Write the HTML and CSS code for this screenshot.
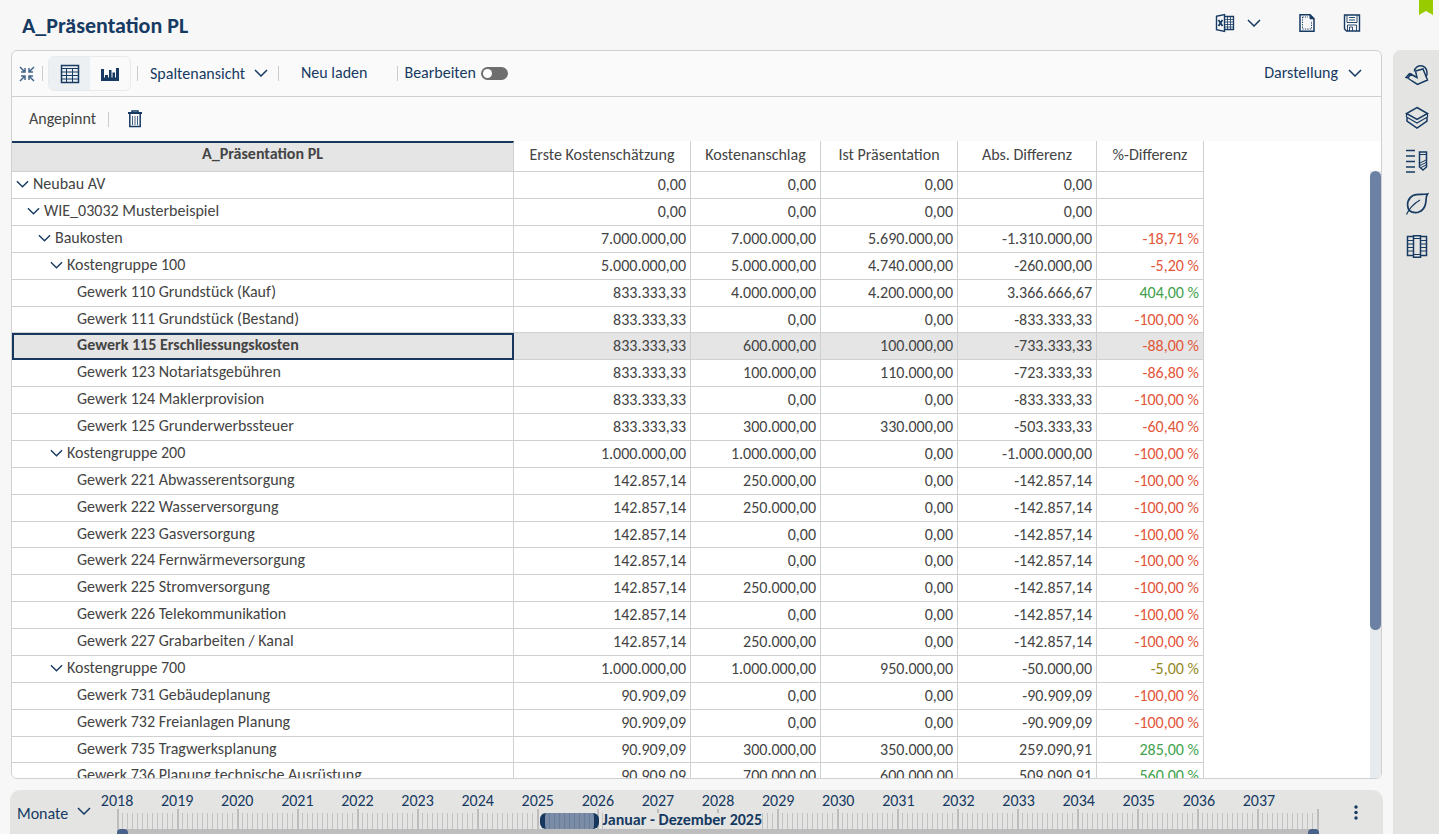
FILE: index.html
```html
<!DOCTYPE html>
<html lang="de">
<head>
<meta charset="utf-8">
<title>A_Präsentation PL</title>
<link rel="stylesheet" href="styles.css">
</head>
<body>
<svg class="defs" aria-hidden="true">
  <symbol id="chev" viewBox="0 0 14 8"><path d="M1 1l6 6 6-6" fill="none" stroke="currentColor" stroke-width="1.5"/></symbol>
</svg>
<header class="top">
  <h1>A_Präsentation PL</h1>
  <div class="actions">
    <button class="icon excel" aria-label="Excel-Export">
      <svg width="20" height="20" viewBox="0 0 20 20" fill="none" stroke="currentColor"><path d="M1.500 3.200l8-1.700v17l-8-1.700z" stroke-width="1.400"/><path d="M3.500 7l4 6M7.500 7l-4 6" stroke-width="1.800"/><path d="M10 3.500h8.500v13H10" stroke-width="1.300"/><path d="M10 6.500h8M10 9h8M10 11.500h8M10 14h8M12.500 4v12M15.500 4v12" stroke-width=".8"/></svg>
      <svg width="14" height="8"><use href="#chev"/></svg>
    </button>
    <button class="icon" aria-label="Neue Seite">
      <svg width="18" height="20" viewBox="0 0 18 20" fill="none" stroke="currentColor"><path d="M2 1.800h10l4 4v12.500H2z" stroke-width="1.500"/><path d="M12 1.800v4h4z" fill="currentColor"/><path d="M4.500 4v12h9V8M4.500 4H10" stroke-dasharray="1.200 1.200"/></svg>
    </button>
    <button class="icon" aria-label="Speichern">
      <svg width="18" height="20" viewBox="0 0 18 20" fill="none" stroke="currentColor"><path d="M1.500 2h15v16H3.500l-2-2z" stroke-width="1.400"/><path d="M4 2v7.500h10V2M6 4.500h6M6 7h6M4.500 18v-6h9v6M6.500 18v-4h3v4" stroke-width=".9"/></svg>
    </button>
  </div>
  <svg class="flag" width="14" height="15" viewBox="0 0 14 15"><path d="M0 0h14v15l-7-4-7 4z" fill="#9c0"/></svg>
</header>
<div class="body">
  <div class="work">
    <main class="panel">
      <div class="bar">
        <button class="icon shrink" aria-label="Verkleinern">
          <svg width="16" height="16" viewBox="0 0 16 16" fill="none" stroke="currentColor" stroke-width="1.500"><path d="M1 1l5 5M2 6h4V2M15 1l-5 5M14 6h-4V2M1 15l5-5M2 10h4v4M15 15l-5-5M14 10h-4v4"/></svg>
        </button>
        <span class="sep"></span>
        <div class="views">
          <button class="view on" aria-label="Tabelle">
            <svg width="20" height="20" viewBox="0 0 20 20" fill="none" stroke="currentColor"><path d="M1.500 1.500h17v17h-17z" stroke-width="1.500"/><path d="M1.500 4.500h17M1.500 8h17M1.500 11.500h17M1.500 15h17M6.500 4.500v14M12.500 4.500v14"/></svg>
          </button>
          <button class="view" aria-label="Diagramm">
            <svg width="20" height="16" viewBox="0 0 20 16" fill="currentColor"><path d="M1 3h3v12H1zM5 9h3v6H5zM9 4h2.500v11H9zM12.500 6.500H15V15h-2.500zM16 2h3v13h-3zM1 11.500h18V15H1z"/></svg>
          </button>
        </div>
        <span class="sep"></span>
        <label class="pick"><select class="spalten" aria-label="Ansicht"><option>Spaltenansicht</option></select><svg width="14" height="8"><use href="#chev"/></svg></label>
        <span class="sep"></span>
        <button class="text">Neu laden</button>
        <span class="sep"></span>
        <label class="switch">Bearbeiten <input type="checkbox"></label>
        <button class="text display">Darstellung <svg width="14" height="8"><use href="#chev"/></svg></button>
      </div>
      <div class="bar pins">
        <span>Angepinnt</span>
        <span class="sep"></span>
        <button class="icon" aria-label="Löschen">
          <svg width="16" height="18" viewBox="0 0 16 18" fill="none" stroke="currentColor"><path d="M1 3h14" stroke-width="2"/><path d="M5 2V1h6v1M2.800 4v12.500h10.400V4" stroke-width="1.500"/><path d="M5.500 6v9M8 6v9M10.500 6v9" stroke-width=".8"/></svg>
        </button>
      </div>
      <div class="grid">
        <table>
          <colgroup><col class="c0"><col class="c1"><col class="c2"><col class="c3"><col class="c4"><col class="c5"></colgroup>
          <thead><tr><th>A_Präsentation PL</th><th>Erste Kostenschätzung</th><th>Kostenanschlag</th><th>Ist Präsentation</th><th>Abs. Differenz</th><th>%-Differenz</th></tr></thead>
          <tbody>
            <tr class="l0"><th><svg width="14" height="8"><use href="#chev"/></svg>Neubau AV</th><td>0,00</td><td>0,00</td><td>0,00</td><td>0,00</td><td></td></tr>
            <tr class="l1"><th><svg width="14" height="8"><use href="#chev"/></svg>WIE_03032 Musterbeispiel</th><td>0,00</td><td>0,00</td><td>0,00</td><td>0,00</td><td></td></tr>
            <tr class="l2"><th><svg width="14" height="8"><use href="#chev"/></svg>Baukosten</th><td>7.000.000,00</td><td>7.000.000,00</td><td>5.690.000,00</td><td>-1.310.000,00</td><td class="neg">-18,71 %</td></tr>
            <tr class="l3"><th><svg width="14" height="8"><use href="#chev"/></svg>Kostengruppe 100</th><td>5.000.000,00</td><td>5.000.000,00</td><td>4.740.000,00</td><td>-260.000,00</td><td class="neg">-5,20 %</td></tr>
            <tr><th>Gewerk 110 Grundstück (Kauf)</th><td>833.333,33</td><td>4.000.000,00</td><td>4.200.000,00</td><td>3.366.666,67</td><td class="pos">404,00 %</td></tr>
            <tr><th>Gewerk 111 Grundstück (Bestand)</th><td>833.333,33</td><td>0,00</td><td>0,00</td><td>-833.333,33</td><td class="neg">-100,00 %</td></tr>
            <tr class="current"><th>Gewerk 115 Erschliessungskosten</th><td>833.333,33</td><td>600.000,00</td><td>100.000,00</td><td>-733.333,33</td><td class="neg">-88,00 %</td></tr>
            <tr><th>Gewerk 123 Notariatsgebühren</th><td>833.333,33</td><td>100.000,00</td><td>110.000,00</td><td>-723.333,33</td><td class="neg">-86,80 %</td></tr>
            <tr><th>Gewerk 124 Maklerprovision</th><td>833.333,33</td><td>0,00</td><td>0,00</td><td>-833.333,33</td><td class="neg">-100,00 %</td></tr>
            <tr><th>Gewerk 125 Grunderwerbssteuer</th><td>833.333,33</td><td>300.000,00</td><td>330.000,00</td><td>-503.333,33</td><td class="neg">-60,40 %</td></tr>
            <tr class="l3"><th><svg width="14" height="8"><use href="#chev"/></svg>Kostengruppe 200</th><td>1.000.000,00</td><td>1.000.000,00</td><td>0,00</td><td>-1.000.000,00</td><td class="neg">-100,00 %</td></tr>
            <tr><th>Gewerk 221 Abwasserentsorgung</th><td>142.857,14</td><td>250.000,00</td><td>0,00</td><td>-142.857,14</td><td class="neg">-100,00 %</td></tr>
            <tr><th>Gewerk 222 Wasserversorgung</th><td>142.857,14</td><td>250.000,00</td><td>0,00</td><td>-142.857,14</td><td class="neg">-100,00 %</td></tr>
            <tr><th>Gewerk 223 Gasversorgung</th><td>142.857,14</td><td>0,00</td><td>0,00</td><td>-142.857,14</td><td class="neg">-100,00 %</td></tr>
            <tr><th>Gewerk 224 Fernwärmeversorgung</th><td>142.857,14</td><td>0,00</td><td>0,00</td><td>-142.857,14</td><td class="neg">-100,00 %</td></tr>
            <tr><th>Gewerk 225 Stromversorgung</th><td>142.857,14</td><td>250.000,00</td><td>0,00</td><td>-142.857,14</td><td class="neg">-100,00 %</td></tr>
            <tr><th>Gewerk 226 Telekommunikation</th><td>142.857,14</td><td>0,00</td><td>0,00</td><td>-142.857,14</td><td class="neg">-100,00 %</td></tr>
            <tr><th>Gewerk 227 Grabarbeiten / Kanal</th><td>142.857,14</td><td>250.000,00</td><td>0,00</td><td>-142.857,14</td><td class="neg">-100,00 %</td></tr>
            <tr class="l3"><th><svg width="14" height="8"><use href="#chev"/></svg>Kostengruppe 700</th><td>1.000.000,00</td><td>1.000.000,00</td><td>950.000,00</td><td>-50.000,00</td><td class="mid">-5,00 %</td></tr>
            <tr><th>Gewerk 731 Gebäudeplanung</th><td>90.909,09</td><td>0,00</td><td>0,00</td><td>-90.909,09</td><td class="neg">-100,00 %</td></tr>
            <tr><th>Gewerk 732 Freianlagen Planung</th><td>90.909,09</td><td>0,00</td><td>0,00</td><td>-90.909,09</td><td class="neg">-100,00 %</td></tr>
            <tr><th>Gewerk 735 Tragwerksplanung</th><td>90.909,09</td><td>300.000,00</td><td>350.000,00</td><td>259.090,91</td><td class="pos">285,00 %</td></tr>
            <tr><th>Gewerk 736 Planung technische Ausrüstung</th><td>90.909,09</td><td>700.000,00</td><td>600.000,00</td><td>509.090,91</td><td class="pos">560,00 %</td></tr>
          </tbody>
        </table>
        <div class="scroll"><div class="thumb"></div></div>
      </div>
    </main>
    <footer class="timeline">
      <label class="pick"><select class="monate" aria-label="Zeiteinheit"><option>Monate</option></select><svg width="14" height="8"><use href="#chev"/></svg></label>
      <div class="scale">
        <div class="years"><span>2018</span><span>2019</span><span>2020</span><span>2021</span><span>2022</span><span>2023</span><span>2024</span><span>2025</span><span>2026</span><span>2027</span><span>2028</span><span>2029</span><span>2030</span><span>2031</span><span>2032</span><span>2033</span><span>2034</span><span>2035</span><span>2036</span><span>2037</span></div>
        <div class="ticks"><i></i><i></i><i></i><i></i><i></i><i></i><i></i><i></i><i></i><i></i><i></i><i></i><i></i><i></i><i></i><i></i><i></i><i></i><i></i><i></i></div>
        <div class="track"><b></b><b></b></div>
        <div class="range"><div class="span"></div><strong>Januar - Dezember 2025</strong></div>
      </div>
      <button class="icon more" aria-label="Mehr"><svg width="4" height="16" viewBox="0 0 4 16" fill="currentColor"><circle cx="2" cy="2" r="1.700"/><circle cx="2" cy="7.500" r="1.700"/><circle cx="2" cy="13" r="1.700"/></svg></button>
    </footer>
  </div>
  <nav class="side">
    <button class="icon" aria-label="Gießkanne"><svg width="24" height="24" viewBox="0 0 24 24" fill="none" stroke="currentColor" stroke-width="1.500"><path d="M10.500 8l7.500-2 4.500 11-10 4.500-5.500-3.500-5-3.500M10.500 8l1.500 6.500-6.500-3.500M1 14.500l3.500-4 1.500.5-3 4z"/><path d="M9.500 8.500c0-4 4-6.500 8-5.500s6 7 3.500 11"/></svg></button>
    <button class="icon" aria-label="Ebenen"><svg width="24" height="24" viewBox="0 0 24 24" fill="none" stroke="currentColor" stroke-width="1.500"><path d="M12 1.500l10.500 6-10.500 6-10.500-6z"/><path d="M1.500 7.500v3.500l10.500 6 10.500-6V7.500" stroke-width="1.200"/><path d="M2 11.500v3.500l10 7 10-7v-3.500"/></svg></button>
    <button class="icon" aria-label="Auswertung"><svg width="24" height="24" viewBox="0 0 24 24" fill="none" stroke="currentColor" stroke-width="1.500"><path d="M1 1.500h9M1 7h9M1 12.500h9M1 18h9M1 23h9M14.500 3h7v15l-3.500 3-3.500-3z"/><path d="M14.500 5.500h7M15 14l6-3M15 16.500l6-3M16 18.500l5-2.500" stroke-width="1"/></svg></button>
    <button class="icon" aria-label="Nachhaltigkeit"><svg width="24" height="24" viewBox="0 0 24 24" fill="none" stroke="currentColor" stroke-width="1.700"><path d="M4 18.500C1 12 3 6 8 3.500c4-1.800 9-.5 14.500-1.500-2 3-1 6-2 10-1.500 7-9 11.500-16.500 6.500z"/><path d="M1.500 22.500C4 17 9 11.500 15 8" stroke-width="1.200"/></svg></button>
    <button class="icon" aria-label="Archiv"><svg width="24" height="24" viewBox="0 0 24 24" fill="none" stroke="currentColor" stroke-width="1.500"><path d="M8.500 1.500H2.500v19h6M15.500 1.500h6v19h-6M8.500 .8h7v21.400h-7z"/><path d="M8.500 3.500h7M8.500 19.500h7M2.500 5.500h6M2.500 9h6M2.500 12.500h6M2.500 16h6M15.500 5.500h6M15.500 9h6M15.500 12.500h6M15.500 16h6" stroke-width="1"/></svg></button>
  </nav>
</div>
</body>
</html>
```

FILE: styles.css
```css
* { box-sizing: border-box; }
body {
  margin: 0;
  height: 100vh;
  display: flex;
  flex-direction: column;
  overflow: hidden;
  background: #f7f7f7;
  color: #444;
  font: 16px/20px Carlito, Lato, sans-serif;
}
button, select { font: inherit; color: inherit; background: none; border: 0; padding: 0; margin: 0; }
select { appearance: none; }
svg { display: block; flex: none; }
.defs { position: absolute; width: 0; height: 0; }
.icon { display: flex; align-items: center; color: #163a62; }

.top { display: flex; justify-content: space-between; align-items: center; height: 50px; flex: none; padding: 0 78px 4px 22px; color: #163a62; }
h1 { margin: 0; padding-top: 6px; font-size: 22px; line-height: 28px; }
.actions { display: flex; gap: 27px; }
.excel { gap: 12px; margin-right: 10px; }
.flag { position: absolute; top: 0; right: 6px; }

.body { flex: 1; display: flex; gap: 10px; min-height: 0; }
.work { flex: 1; min-width: 0; display: flex; flex-direction: column; gap: 11px; padding-left: 10px; }
.panel { flex: 1; min-height: 0; display: flex; flex-direction: column; margin: 0 1px; border: 1px solid #cfd0d1; border-radius: 6px; background: #fafafa; overflow: hidden; }

.bar { display: flex; align-items: center; height: 46px; flex: none; border-bottom: 1px solid #cfd0d1; color: #163a62; }
.shrink { margin: 0 7px; color: #45678c; }
.sep { width: 1px; height: 15px; background: #ccc; }
.views { display: flex; margin: 0 6px 0 5px; border: 1px solid #e8eaec; border-radius: 6px; overflow: hidden; }
.view { display: grid; place-items: center; width: 40px; height: 33px; color: #163a62; }
.view.on { width: 41px; background: #edf0f3; }
.pick { display: flex; align-items: center; gap: 8px; }
.pick svg { margin-bottom: 2px; }
.views + .sep + .pick { margin: 0 10px 0 12px; }
.text { display: flex; align-items: center; gap: 10px; margin: 0 30px 0 22px; padding-bottom: 1px; }
.display { margin: 0 19px 0 auto; }
.switch { display: flex; align-items: center; gap: 5px; padding: 0 0 1px 6px; }
.switch input { appearance: none; display: flex; align-items: center; width: 27px; height: 13px; margin: 0; padding: 2px; border-radius: 7px; background: #6e6e6e; }
.switch input::before { content: ""; width: 9px; height: 9px; border-radius: 50%; background: #fff; }
.pins { height: 44px; border: 0; padding-left: 17px; gap: 12px; color: #444; }
.pins .icon { margin-left: 6px; }

.grid { flex: 1; min-height: 0; display: flex; justify-content: space-between; background: #fff; overflow: hidden; }
table { table-layout: fixed; width: 1192px; flex: none; align-self: flex-start; border-collapse: separate; border-spacing: 0; }
.c0 { width: 502px; }
.c1 { width: 177px; }
.c2 { width: 130px; }
.c3 { width: 137px; }
.c4 { width: 139px; }
.c5 { width: 107px; }
th, td { border: solid #cfd0d1; border-width: 0 1px 1px 0; font-weight: 400; white-space: nowrap; line-height: 20px; vertical-align: top; }
thead th { height: 31px; padding: 4px 0 0; }
thead th:first-child { background: #e4e5e4; border-top: 2px solid #17375f; padding: 1px 0 0; font-weight: 700; }
tbody tr { height: 27px; }
tbody tr:nth-child(8n + 6) { height: 26px; }
td { padding: 3px 4px 0 0; text-align: right; }
tbody th { padding: 2px 0 0 65px; text-align: left; }
tbody th svg { display: inline-block; width: 13px; margin: 0 4px 1px 0; color: #163a62; }
.l0 th { padding-left: 4px; }
.l1 th { padding-left: 15px; }
.l2 th { padding-left: 26px; }
.l3 th { padding-left: 38px; }
.current th, .current td { background: #e4e5e4; }
.current th { outline: 2px solid #17375f; outline-offset: -2px; font-weight: 700; }
.neg { color: #e2553a; }
.pos { color: #3fa24b; }
.mid { color: #94881c; }
.scroll { width: 11px; margin-top: 30px; background: #e8ebee; }
.thumb { height: 459px; max-height: 76%; border-radius: 6px; background: #6c81a4; }

.timeline { display: flex; height: 44px; flex: none; border-radius: 10px 10px 0 0; background: #e4e4e2; color: #163a62; }
.timeline .pick { width: 107px; flex: none; padding: 3px 0 0 7px; }
.timeline .pick svg { margin-bottom: 5px; }
.scale { position: relative; flex: 1; min-width: 0; display: flex; flex-direction: column; }
.years { display: grid; grid-template-columns: repeat(20, 1fr); margin: 2px 30px 0 -30px; text-align: center; line-height: 17px; }
.ticks { display: grid; grid-template-columns: repeat(20, 1fr); height: 20px; flex: none; border-right: 2px solid #bdbdbd; }
.ticks i { border-left: 2px solid #bdbdbd; background: repeating-linear-gradient(90deg, transparent 0 3px, #c2c2c2 3px 4px, transparent 4px 5px) 0 4px no-repeat; }
.track { flex: 1; display: flex; justify-content: space-between; background: #bdbdbd; }
.track b { width: 11px; border-radius: 4px 4px 0 0; background: #47618a; }
.range { position: absolute; top: 23px; left: 35.2%; right: 0; display: flex; gap: 4px; height: 16px; pointer-events: none; }
.span { width: 7.500%; border: solid #17375f; border-width: 0 5px; border-radius: 6px; background: repeating-linear-gradient(90deg, #7a8ca6 0 4px, #687c9b 4px 5px); }
.range strong { background: #e4e4e2; line-height: 14px; }
.more { padding: 2px 25px 0 35px; }

.side { width: 46px; flex: none; display: flex; flex-direction: column; align-items: center; gap: 19px; padding: 13px 0 0 2px; border-radius: 8px 0 0; background: #e4e4e2; }
```
